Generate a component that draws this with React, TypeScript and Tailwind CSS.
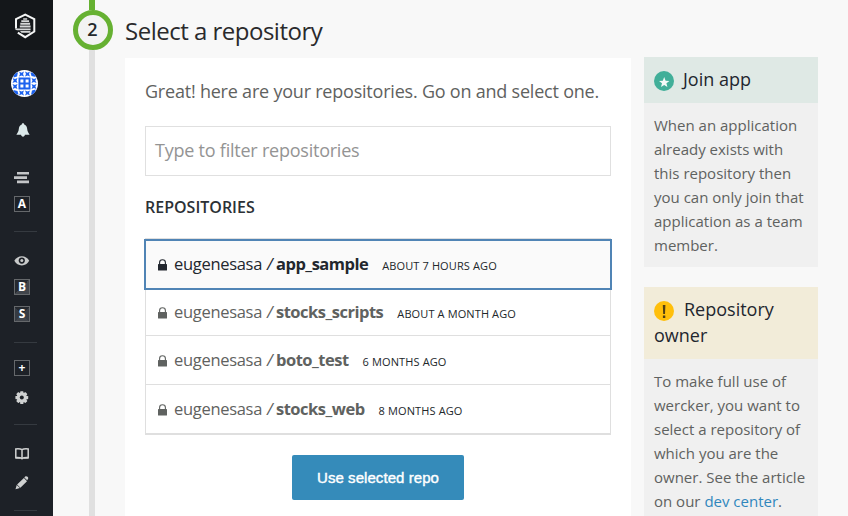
import React from "react";

const Divider = ({ className }: { className: string }) => (
  <div className={`ml-[14px] h-px w-[23px] shrink-0 bg-[#353a40] ${className}`} />
);

const Key = ({ label, className, shade }: { label: string; className: string; shade?: string }) => (
  <div
    className={`ml-[14px] flex h-4 w-4 shrink-0 items-center justify-center border border-[#65686b] text-[12px] leading-none font-bold text-white ${shade ?? ""} ${className}`}
  >
    {label}
  </div>
);

const Logo = () => (
  <svg width="22" height="26" viewBox="0 0 22 26" fill="none" className="mt-[13px] ml-[14px]">
    <path d="M2 15.500V6.200L11.200 1.600l9.100 4.600v12.300l-9.100 5.700-7.400-4.600" stroke="#f4f5f5" strokeWidth="2" />
    <path
      d="M9.200 5.200h4v1.600h-4zM7.300 7.300h7.800V9H7.300zM6.300 9.800h9.800v2H6.300zM5.800 12.600h10.800v2H5.800zM1 15.400h15.600v1.900H4.500C2.800 17.300 1 16.800 1 15.400zM6 18.100h10.400v1.600H7.500z"
      fill="#d5d7d8"
    />
  </svg>
);

const turns = [0, 90, 180, 270];
const Avatar = () => (
  <svg width="27" height="27" viewBox="0 0 27 27" className="mt-5 ml-[11px] shrink-0 overflow-hidden rounded-full">
    <rect width="27" height="27" fill="#fff" />
    <rect x="7.500" y="7.500" width="12" height="12" fill="#1c62ee" />
    <path d="M9.400 9.400h3v3h-3zM14.600 9.400h3v3h-3zM9.400 14.600h3v3h-3zM14.600 14.600h3v3h-3z" fill="#fff" />
    <g fill="#1c62ee">
      {turns.map((angle) => (
        <g key={angle} transform={`rotate(${angle} 13.5 13.5)`}>
          <path d="M8 1.500l2.500 1.200L13 1.500 12 4l1 2.500-2.500-1L8 6.500 9 4zM14 1.500l2.500 1.200L19 1.500 18 4l1 2.500-2.500-1L14 6.500 15 4z" />
          <path d="M2.500 3.500L7 2.300 6 6.500l-3.500 1z" />
        </g>
      ))}
    </g>
  </svg>
);

const Sidebar = () => (
  <aside className="flex w-[53px] shrink-0 flex-col overflow-hidden bg-[#1d2127]">
    <div className="h-[50px] shrink-0 bg-[#14171a]">
      <Logo />
    </div>
    <Avatar />
    <svg width="14" height="14" viewBox="0 0 14 14" className="mt-[26px] ml-4 shrink-0" fill="#dce9ea">
      <path d="M7 .3c.8 0 1.200.5 1.200 1.100C10.300 2 11 3.600 11.200 6c.2 2.500 1.200 3.700 2.300 5.500v.3H.5v-.3C1.600 9.700 2.600 8.500 2.800 6 3 3.600 3.700 2 5.800 1.400 5.800.8 6.200.3 7 .3zM5 11.500h4c-.2 1.400-1 2.200-2 2.200s-1.800-.8-2-2.200z" />
    </svg>
    <svg width="16" height="12" viewBox="0 0 16 12" className="mt-[35px] ml-[14px] shrink-0" fill="#c3c5c7">
      <path d="M3 0h12v2.600H3zM0 4.300h13v2.600H0zM3 8.600h12v2.600H3z" />
    </svg>
    <Key label="A" className="mt-3" />
    <Divider className="mt-[19px]" />
    <svg width="16" height="10" viewBox="0 0 16 10" className="mt-6 ml-[14px] shrink-0">
      <path d="M.3 4.800C2 1.800 4.600.2 7.800.2S13.500 1.800 15.200 4.800C13.500 7.800 11 9.400 7.800 9.400S2 7.800.3 4.800z" fill="#c8caca" />
      <circle cx="7.800" cy="4.600" r="3.100" fill="#1d2127" />
      <circle cx="7.800" cy="4.600" r="1.500" fill="#c8caca" />
    </svg>
    <Key label="B" className="mt-[13px]" shade="bg-[linear-gradient(135deg,#25292f_50%,#41454b_50%)]" />
    <Key label="S" className="mt-[11px]" shade="bg-[conic-gradient(from_-45deg,#25292f_25%,#353b43_25%,#353b43_50%,#41454b_50%,#41454b_75%,#353b43_75%)]" />
    <Divider className="mt-5" />
    <Key label="+" className="mt-[17px]" />
    <svg width="14" height="14" viewBox="0 0 14 14" className="mt-[15px] ml-[15px] shrink-0">
      <g fill="#cfd1d1">
        <circle cx="6.800" cy="6.600" r="5.100" />
        {[0, 45, 90, 135].map((a) => (
          <rect key={a} x="5.200" y=".2" width="3.200" height="12.800" rx=".6" transform={`rotate(${a} 6.8 6.6)`} />
        ))}
      </g>
      <circle cx="6.800" cy="6.600" r="2" fill="#1d2127" />
    </svg>
    <Divider className="mt-[19px]" />
    <svg width="14" height="12" viewBox="0 0 14 12" className="mt-[23px] ml-[15px] shrink-0" fill="none" stroke="#cfd1d1" strokeWidth="1.500">
      <path d="M7 1.700C5.500.7 3.500.6.8.9v8.600c2.700-.2 4.700 0 6.200 1.200 1.500-1.200 3.500-1.400 6.200-1.200V.9C10.500.6 8.500.7 7 1.700zv8.800" />
      <path d="M.4 10h4.800M8.800 10h4.800" />
    </svg>
    <svg width="14" height="14" viewBox="0 0 14 14" className="mt-[16px] ml-[15px] shrink-0" fill="#cfd1d1">
      <path d="M.5 13.300l1.200-4.300 3.200 3.100zM2.100 8.500L8.900 1.900l3.100 3.300-6.600 6.600zM9.300 1.500l.9-.9c.8-.7 1.600-.5 2.400.2.800.8.900 1.600.2 2.400l-.6 1z" />
    </svg>
    <Divider className="mt-5" />
  </aside>
);

const Lock = () => (
  <svg width="9" height="12" viewBox="0 0 9 12" className="mt-[2px] mr-[7px] shrink-0">
    <path d="M1.600 5.500V3.400a2.900 2.700 0 015.800 0v2.100" fill="none" stroke="currentColor" strokeWidth="1.100" />
    <rect y="5" width="9" height="6.500" rx=".5" fill="currentColor" />
  </svg>
);

const RepoText = ({ name, age }: { name: string; age: string }) => (
  <>
    <Lock />
    <span className="w-[93px] tracking-[-0.3px]">eugenesasa</span>
    <span className="w-[9px] italic">/</span>
    <span className="font-bold tracking-[-0.5px]">{name}</span>
    <span className="mt-[3px] ml-[14px] text-[11px] tracking-[0.12px] text-[#22272b]">{age}</span>
  </>
);

const Star = () => (
  <svg width="20" height="20" viewBox="0 0 20 20" className="mr-[9px] inline-block align-[-5px]">
    <circle cx="10" cy="10" r="10" fill="#41af99" />
    <path d="M10.200 6l1.400 3.700 3.800.2-3 2.400 1 3.800-3.200-2.100L7 16.100l1-3.800-3-2.400 3.800-.2z" fill="#f4faf8" />
  </svg>
);

const Warn = () => (
  <svg width="20" height="20" viewBox="0 0 20 20" className="mr-[10px] inline-block align-[-5px]">
    <circle cx="10" cy="10" r="10" fill="#ffbf0b" />
    <path d="M8.800 4h2.600l-.4 9H9.200zM8.900 14.600h2.400v2.400H8.900z" fill="#4f3f14" />
  </svg>
);

export default function App() {
  return (
    <div className="flex h-[516px] w-[848px] overflow-hidden bg-[#f8f8f8] font-['Open_Sans','Noto_Sans',sans-serif] text-[#5f6260]">
      <Sidebar />
      <div className="ml-5 flex w-10 shrink-0 flex-col items-start">
        <div className="ml-4 h-[10px] w-[6px] shrink-0 bg-[#66b132]" />
        <div className="flex h-10 w-10 shrink-0 items-center justify-center rounded-full border-[5px] border-[#66b132] bg-[#f3f3f3] pr-px pb-px text-[18px] font-semibold text-[#24282c]">
          2
        </div>
        <div className="ml-4 w-[6px] grow bg-[#e0e0e0]" />
      </div>
      <main className="ml-3 flex w-[506px] shrink-0 flex-col">
        <h1 className="h-[58px] shrink-0 pt-[14px] text-[24px] leading-[33px] tracking-[-0.5px] whitespace-nowrap text-[#2a2a2c]">Select a repository</h1>
        <section className="flex grow flex-col bg-white px-5">
          <p className="mt-5 text-[18px] leading-[26px] tracking-[-0.215px] whitespace-nowrap">Great! here are your repositories. Go on and select one.</p>
          <div className="mt-[22px] flex h-[50px] shrink-0 items-center border border-[#e0e0e0] pb-[2px] pl-[9px] text-[18px] tracking-[-0.23px] text-[#949494]">
            Type to filter repositories
          </div>
          <h2 className="mt-5 h-[42px] shrink-0 text-[16px] leading-[22px] font-semibold text-[#2c3136]">REPOSITORIES</h2>
          <div className="flex h-[197px] shrink-0 flex-col border border-b-2 border-[#dfdfdf] text-[16.5px] leading-[24px] whitespace-nowrap">
            <div className="-mx-[2px] flex h-[51px] shrink-0 items-center border-2 border-[#5084b5] bg-[#fafafa] pb-px pl-[12px] text-[#22272e]">
              <RepoText name="app_sample" age="ABOUT 7 HOURS AGO" />
            </div>
            <div className="flex h-[46px] shrink-0 items-center border-b border-[#dfdfdf] pb-px pl-[12px]">
              <RepoText name="stocks_scripts" age="ABOUT A MONTH AGO" />
            </div>
            <div className="flex h-[49px] shrink-0 items-center border-b border-[#dfdfdf] pl-[12px]">
              <RepoText name="boto_test" age="6 MONTHS AGO" />
            </div>
            <div className="flex h-12 shrink-0 items-center pl-[12px]">
              <RepoText name="stocks_web" age="8 MONTHS AGO" />
            </div>
          </div>
          <button className="mt-5 h-[45px] w-[172px] shrink-0 self-center rounded-[2px] bg-[#358bba] pt-px font-['Liberation_Sans',sans-serif] text-[15px] tracking-[0.06px] text-white [-webkit-text-stroke:0.4px_white]">
            Use selected repo
          </button>
        </section>
      </main>
      <aside className="mt-[57px] ml-[13px] flex w-[174px] shrink-0 flex-col gap-5 text-[15px] leading-[24px]">
        <section className="h-[210px] shrink-0 bg-[#f0f0f0]">
          <h3 className="h-[46px] bg-[#dfe9e5] px-[10px] pt-[9px] text-[18px] leading-[26px] text-[#22262e]">
            <Star />
            Join app
          </h3>
          <p className="px-[10px] pt-[10px] whitespace-nowrap">
            When an application<br />already exists with<br />this repository then<br />you can only join that<br />application as a team<br />member.
          </p>
        </section>
        <section className="h-[240px] shrink-0 bg-[#f0f0f0]">
          <h3 className="h-[72px] bg-[#f2ecd9] px-[10px] pt-[9px] text-[18px] leading-[26px] text-[#22262e]">
            <Warn />
            Repository<br />owner
          </h3>
          <p className="px-[10px] pt-[10px] whitespace-nowrap">
            To make full use of<br />wercker, you want to<br />select a repository of<br />which you are the<br />owner. See the article<br />on our <span className="text-[#3087bd]">dev center</span>.
          </p>
        </section>
      </aside>
    </div>
  );
}
